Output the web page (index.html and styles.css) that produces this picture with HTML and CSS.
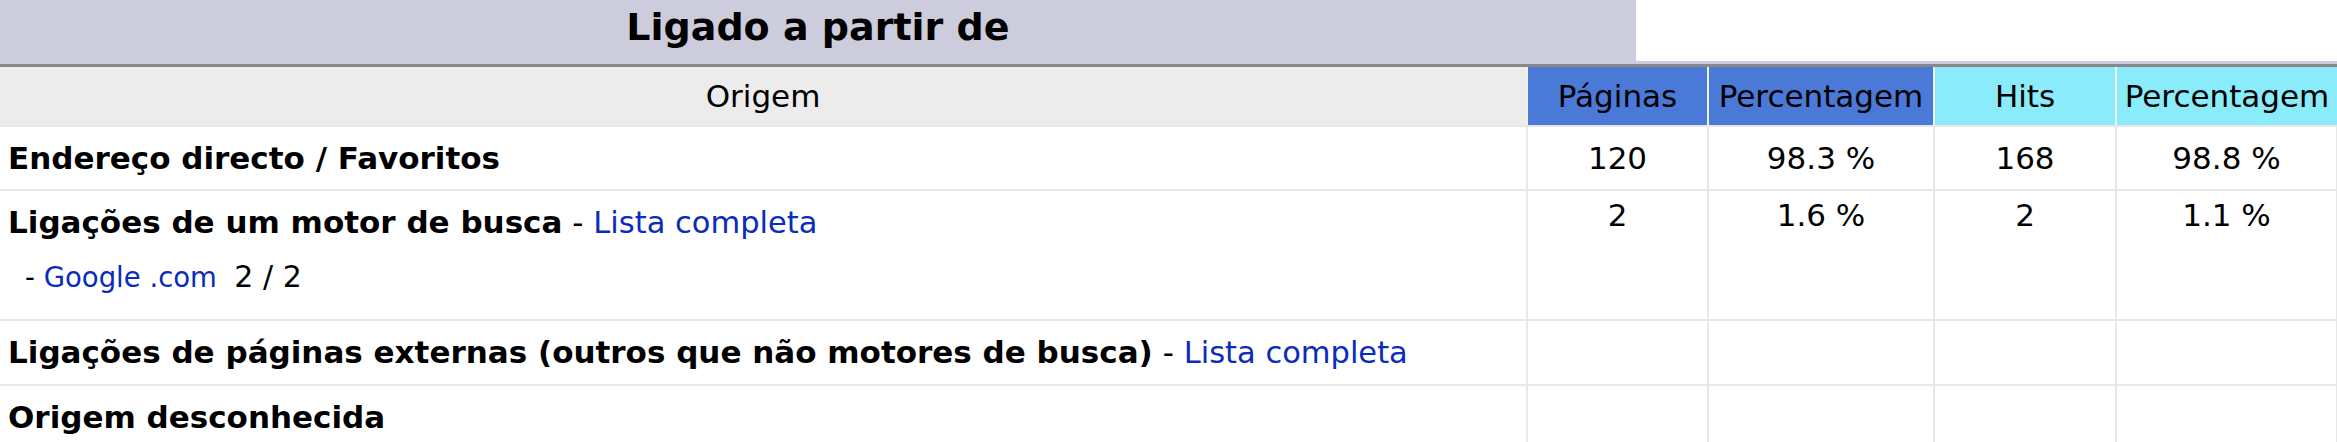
FILE: index.html
```html
<!DOCTYPE html>
<html lang="pt">
<head>
    <meta charset="UTF-8">
    <title>Ligado a partir de</title>
    <link rel="stylesheet" href="styles.css">
</head>
<body>
    <div class="panel">
        <div class="panel-head">
            <div class="panel-title">Ligado a partir de</div>
            <div class="panel-blank"></div>
        </div>
        <table class="data">
            <colgroup>
                <col class="col-origin">
                <col class="col-pages">
                <col class="col-pct">
                <col class="col-hits">
                <col class="col-pct2">
            </colgroup>
            <thead>
                <tr>
                    <th class="h-origin">Origem</th>
                    <th class="h-pages">Páginas</th>
                    <th class="h-pages">Percentagem</th>
                    <th class="h-hits">Hits</th>
                    <th class="h-hits">Percentagem</th>
                </tr>
            </thead>
            <tbody>
                <tr>
                    <td class="label"><b>Endereço directo / Favoritos</b></td>
                    <td class="num">120</td>
                    <td class="num">98.3 %</td>
                    <td class="num">168</td>
                    <td class="num">98.8 %</td>
                </tr>
                <tr class="multi">
                    <td class="label">
                        <b>Ligações de um motor de busca</b> - <a href="#">Lista completa</a>
                        <div class="sub">- <a href="#">Google .com</a>&nbsp; <span class="count">2 / 2</span></div>
                    </td>
                    <td class="num">2</td>
                    <td class="num">1.6 %</td>
                    <td class="num">2</td>
                    <td class="num">1.1 %</td>
                </tr>
                <tr>
                    <td class="label"><b>Ligações de páginas externas (outros que não motores de busca)</b> - <a href="#">Lista completa</a></td>
                    <td class="num"></td>
                    <td class="num"></td>
                    <td class="num"></td>
                    <td class="num"></td>
                </tr>
                <tr>
                    <td class="label"><b>Origem desconhecida</b></td>
                    <td class="num"></td>
                    <td class="num"></td>
                    <td class="num"></td>
                    <td class="num"></td>
                </tr>
            </tbody>
        </table>
    </div>
</body>
</html>
```

FILE: styles.css
```css
body {
    margin: 0;
    padding: 0;
    background: #fff;
    color: #000;
    font-family: "DejaVu Sans", Verdana, sans-serif;
    font-size: 31px;
}
a {
    color: #0a2cbb;
    text-decoration: none;
}
.panel {
    background: #ccccdd;
}
.panel-head {
    display: flex;
    height: 61px;
    margin-bottom: 3px;
}
.panel-title {
    width: 70%;
    padding-bottom: 6px;
    line-height: 55px;
    font-size: 38px;
    font-weight: bold;
    text-align: center;
}
.panel-blank {
    flex: 1;
    background: #fff;
}
.data {
    width: 100%;
    table-layout: fixed;
    border-collapse: collapse;
    border-top: 3px solid #888;
    background: #fff;
}
.col-origin { width: 1527px; }
.col-pages { width: 181px; }
.col-pct { width: 226px; }
.col-hits { width: 182px; }
.col-pct2 { width: 221px; }
th {
    height: 58px;
    padding: 0;
    font-weight: normal;
    text-align: center;
    border-left: 2px solid #f2f2f2;
    border-bottom: 2px solid #e8e8e8;
}
th.h-origin {
    background: #ececec;
    border-left: none;
}
th.h-pages {
    background: #4b79d8;
}
th.h-hits {
    background: #8aecfa;
}
td {
    padding: 12px 8px;
    line-height: 38px;
    border: 2px solid #e8e8e8;
    border-top: none;
}
td.label {
    text-align: left;
    vertical-align: top;
    border-left: none;
}
td.label a {
    font-size: 30.5px;
}
td.label b {
    font-size: 31px;
}
td.num {
    text-align: center;
    vertical-align: top;
}
tr.multi td.num {
    padding-top: 5px;
}
.sub {
    margin: 18px 0 13px;
    padding-left: 17px;
    font-size: 27.5px;
    line-height: 34px;
}
td.label .sub a {
    font-size: 27.5px;
}
.sub .count {
    font-size: 30px;
}
```
